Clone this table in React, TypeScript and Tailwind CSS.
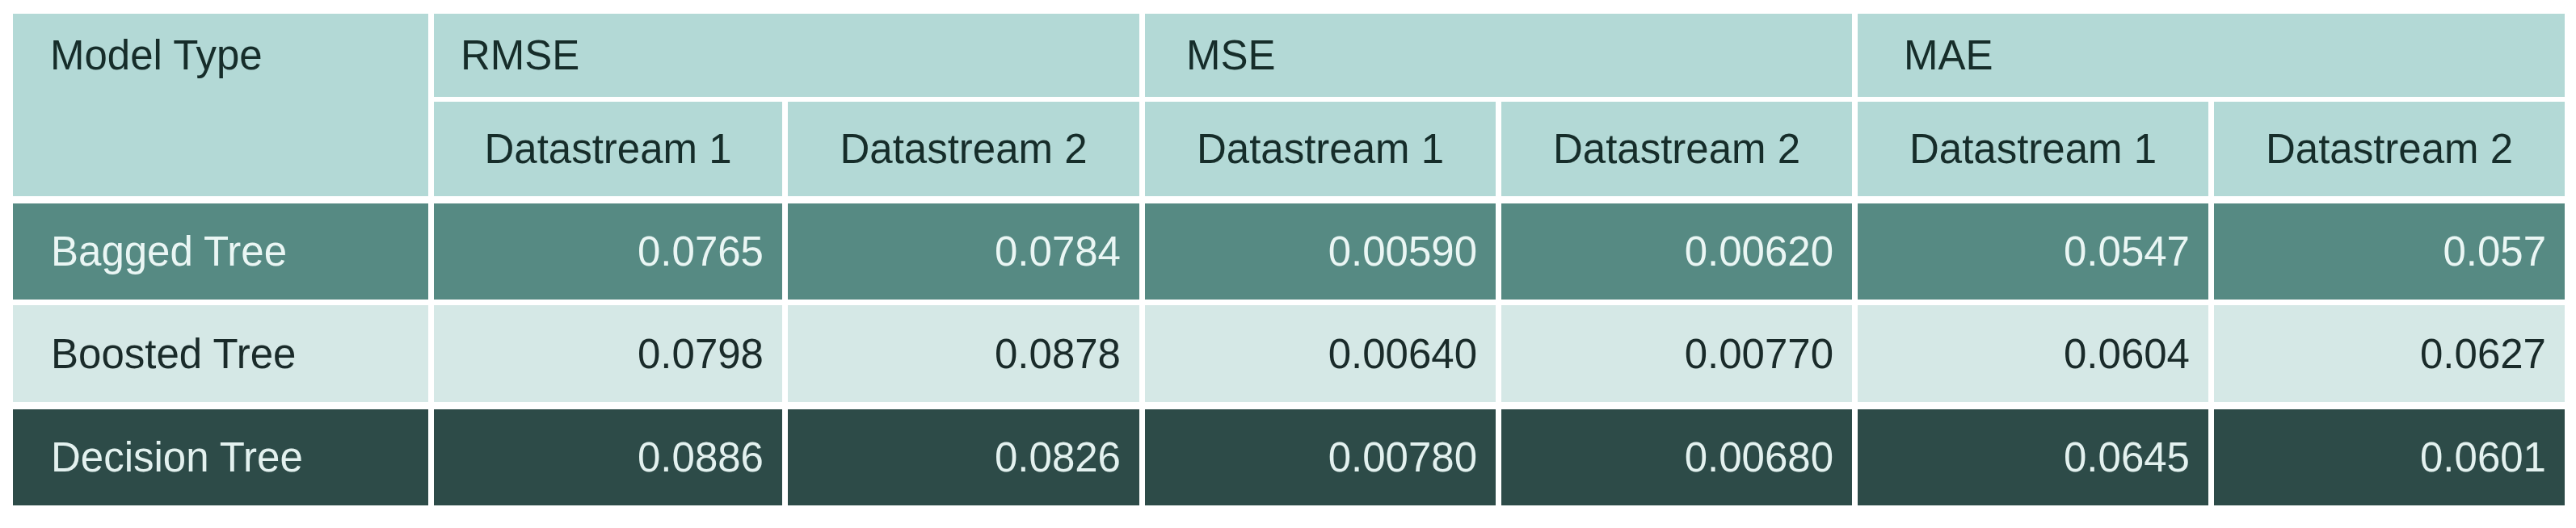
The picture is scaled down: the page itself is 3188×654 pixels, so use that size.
import React from 'react';

const cols = 'grid grid-cols-[514px_431px_435px_434px_434px_434px_434px] gap-x-[7px]';

const rows = [
  {
    name: 'Bagged Tree',
    values: ['0.0765', '0.0784', '0.00590', '0.00620', '0.0547', '0.057'],
    bg: 'bg-[#568a83]',
    text: 'text-[#eaf6f4]',
    h: 'h-[119px]',
    mt: 'mt-[9px]',
  },
  {
    name: 'Boosted Tree',
    values: ['0.0798', '0.0878', '0.00640', '0.00770', '0.0604', '0.0627'],
    bg: 'bg-[#d5e8e6]',
    text: 'text-[#1a2b2a]',
    h: 'h-[120px]',
    mt: 'mt-[7px]',
  },
  {
    name: 'Decision Tree',
    values: ['0.0886', '0.0826', '0.00780', '0.00680', '0.0645', '0.0601'],
    bg: 'bg-[#2d4b48]',
    text: 'text-[#e3f1ef]',
    h: 'h-[119px]',
    mt: 'mt-[9px]',
  },
];

const metrics = [
  { label: 'RMSE', pad: 'pl-[33px]' },
  { label: 'MSE', pad: 'pl-[51px]' },
  { label: 'MAE', pad: 'pl-[57px]' },
];

export default function App() {
  return (
    <div className="w-[3188px] h-[654px] bg-white pt-[17px] pl-[16px] font-['Liberation_Sans',Arial,sans-serif] text-[51px] leading-none">
      {/* header */}
      <div className={`${cols} grid-rows-[103px_117px] gap-y-[6px] text-[#162d2a]`}>
        <div className="row-span-2 bg-[#b3d9d6] pl-[46px]">
          <div className="h-[103px] flex items-center">Model Type</div>
        </div>
        {metrics.map((m) => (
          <div key={m.label} className={`col-span-2 bg-[#b3d9d6] flex items-center ${m.pad}`}>
            {m.label}
          </div>
        ))}
        {metrics.map((m) => (
          <React.Fragment key={m.label + '-ds'}>
            <div className="bg-[#b3d9d6] flex items-center justify-center">Datastream 1</div>
            <div className="bg-[#b3d9d6] flex items-center justify-center">Datastream 2</div>
          </React.Fragment>
        ))}
      </div>

      {/* body */}
      {rows.map((r) => (
        <div key={r.name} className={`${cols} ${r.h} ${r.mt} ${r.text}`}>
          <div className={`${r.bg} flex items-center pl-[47px]`}>{r.name}</div>
          {r.values.map((v, i) => (
            <div key={i} className={`${r.bg} flex items-center justify-end pr-[23px]`}>
              {v}
            </div>
          ))}
        </div>
      ))}
    </div>
  );
}
